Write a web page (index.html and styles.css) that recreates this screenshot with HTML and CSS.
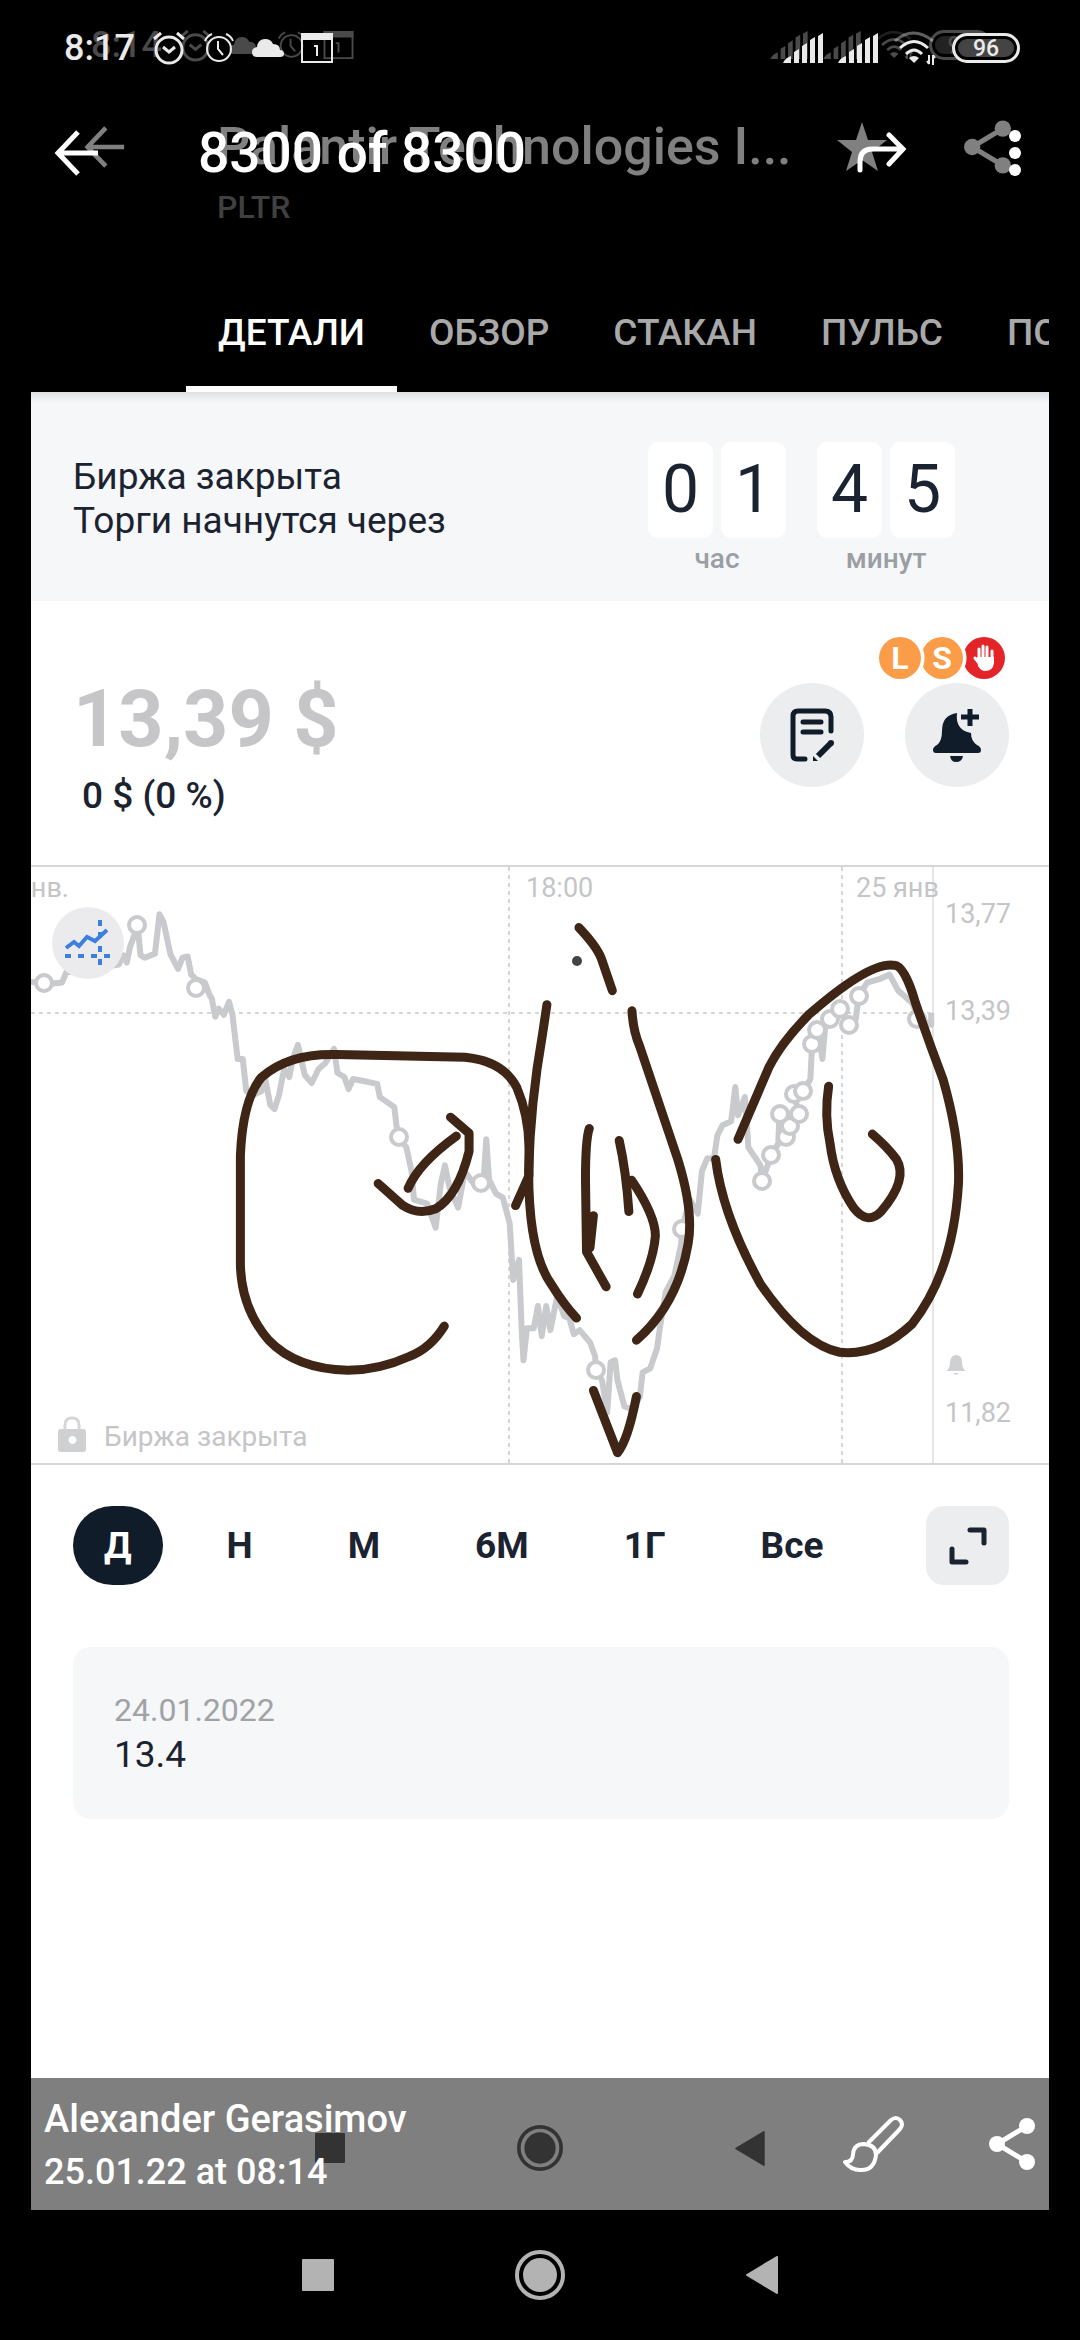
FILE: index.html
```html
<!DOCTYPE html>
<html lang="ru">
<head>
    <meta charset="UTF-8">
    <meta name="viewport" content="width=device-width, initial-scale=1.0">
    <title>8300 of 8300</title>
    <link rel="stylesheet" href="styles.css">
</head>
<body>

<!-- shared icons -->
<svg class="sprite" aria-hidden="true">
    <symbol id="alarm" viewBox="0 0 34 34">
        <g fill="none" stroke="currentColor" stroke-width="3">
            <circle cx="17" cy="19" r="13"/>
            <path d="M2 8 L9 2 M32 8 L25 2"/>
            <path d="M11 16 L17 21 L23 16"/>
        </g>
    </symbol>
    <symbol id="clock" viewBox="0 0 32 32">
        <g fill="none" stroke="currentColor" stroke-width="2">
            <circle cx="16" cy="17" r="12"/>
            <path d="M2 9 Q4 4 9 2 M30 9 Q28 4 23 2"/>
            <path d="M15 9 V17 L20 23"/>
        </g>
    </symbol>
    <symbol id="cloud" viewBox="0 0 32 20">
        <path fill="currentColor" d="M5 19 Q0 19 0 14 Q0 10 5 9 Q6 1 13 1 Q19 1 21 6 Q28 6 28 12 Q32 12 32 16 Q32 19 28 19 Z"/>
    </symbol>
    <symbol id="calendar" viewBox="0 0 32 30">
        <path fill="none" stroke="currentColor" stroke-width="2" d="M1 1 H31 V29 H1 Z"/>
        <path fill="currentColor" d="M0 0 H32 V7 H0 Z M13 12 H17 V23 H15 V14 H13 Z"/>
    </symbol>
    <symbol id="signal" viewBox="0 0 40 30">
        <path fill="currentColor" d="M0 30 Q2 25 8 23 V30 Z M11 19 L16 16 V30 H11 Z M19 13 L24 10 V30 H19 Z M27 7 L32 4 V30 H27 Z M35 3 L40 0 V30 H35 Z"/>
    </symbol>
    <symbol id="wifi" viewBox="0 0 44 34">
        <g fill="none" stroke="currentColor" stroke-width="3">
            <path opacity=".4" d="M2 10 Q20 -6 40 10"/>
            <path d="M7 17 Q21 4 35 17"/>
            <path d="M13 23 Q21 15 29 23"/>
            <path stroke-width="2" d="M36 24 V33 M40 34 V24 M34 30 L36 33 M40 24 L42 27"/>
        </g>
        <path fill="currentColor" d="M16 27 Q21 23 26 27 L21 32 Z"/>
    </symbol>
    <symbol id="back" viewBox="0 0 44 46">
        <path fill="none" stroke="currentColor" stroke-width="5" d="M44 23 H4 M24 2 L4 23 L24 44"/>
    </symbol>
    <symbol id="share" viewBox="0 0 46 52">
        <path fill="none" stroke="currentColor" stroke-width="5" d="M38 8 L8 26 L38 44"/>
        <g fill="currentColor">
            <circle cx="38" cy="8" r="8"/>
            <circle cx="8" cy="26" r="8"/>
            <circle cx="38" cy="44" r="8"/>
        </g>
    </symbol>
    <symbol id="nav-recent" viewBox="0 0 32 32">
        <rect fill="currentColor" width="32" height="32" rx="1"/>
    </symbol>
    <symbol id="nav-home" viewBox="0 0 50 50">
        <circle cx="25" cy="25" r="23" fill="none" stroke="currentColor" stroke-width="4"/>
        <circle cx="25" cy="25" r="17" fill="currentColor"/>
    </symbol>
    <symbol id="nav-back" viewBox="0 0 32 38">
        <path fill="currentColor" stroke="currentColor" stroke-width="2" stroke-linejoin="round" d="M1 19 L31 1 V37 Z"/>
    </symbol>
</svg>

<main class="photo">
    <div class="status status-photo">
        <span class="time">8:14</span>
        <svg width="33" height="33"><use href="#alarm"/></svg>
        <svg width="31" height="19"><use href="#cloud"/></svg>
        <svg width="29" height="30"><use href="#clock"/></svg>
        <svg width="31" height="28"><use href="#calendar"/></svg>
        <svg class="push" width="38" height="28"><use href="#signal"/></svg>
        <svg width="38" height="28"><use href="#signal"/></svg>
        <svg width="38" height="30"><use href="#wifi"/></svg>
        <span class="battery">96</span>
    </div>

    <header class="stock-header">
        <button class="icon-button" aria-label="Назад"><svg width="42" height="42"><use href="#back"/></svg></button>
        <div class="stock-name">
            <h2>Palantir Technologies I...</h2>
            <p>PLTR</p>
        </div>
        <button class="icon-button" aria-label="Избранное">
            <svg width="52" height="50" viewBox="0 0 52 50"><path fill="currentColor" d="M26 0 L32 18 H51 L36 30 L42 49 L26 38 L10 49 L16 30 L1 18 H20 Z"/></svg>
        </button>
        <button class="icon-button" aria-label="Поделиться"><svg width="47" height="54"><use href="#share"/></svg></button>
    </header>

    <nav class="tabs">
        <button class="tab active">ДЕТАЛИ</button>
        <button class="tab">ОБЗОР</button>
        <button class="tab">СТАКАН</button>
        <button class="tab">ПУЛЬС</button>
        <button class="tab">ПОРТФЕЛЬ</button>
    </nav>

    <section class="market-closed">
        <p class="closed-text">Биржа закрыта<br>Торги начнутся через</p>
        <div class="counter">
            <div class="digits"><span>0</span><span>1</span></div>
            <p>час</p>
        </div>
        <div class="counter">
            <div class="digits"><span>4</span><span>5</span></div>
            <p>минут</p>
        </div>
    </section>

    <section class="quote">
        <div class="quote-price">
            <p class="price">13,39 $</p>
            <p class="change">0 $ (0 %)</p>
        </div>
        <div class="quote-side">
            <div class="badges">
                <span class="badge">L</span>
                <span class="badge">S</span>
                <span class="badge badge-stop">
                    <svg width="22" height="28" viewBox="0 0 22 28"><g fill="none" stroke="#fff" stroke-width="3" stroke-linecap="round"><path d="M6 16 V5 M10 14 V2 M14 14 V3 M19 16 V7 M6 19 L2 14"/></g><path fill="#fff" d="M4 13 H21 V19 Q20 27 12 27 Q8 27 5 22 Z"/></svg>
                </span>
            </div>
            <div class="quote-actions">
                <button class="round-button" aria-label="Заметка">
                    <svg width="46" height="54" viewBox="0 0 46 54">
                        <g fill="none" stroke="currentColor" stroke-width="5" stroke-linecap="round">
                            <path d="M16 51 H8 Q4 51 4 47 V8 Q4 3 9 3 H36 Q42 3 42 9 V23"/>
                            <path d="M14 14 H32 M14 24 H32"/>
                        </g>
                        <path fill="none" stroke="currentColor" stroke-width="6" d="M29 48 L42 35"/>
                        <path fill="currentColor" d="M24 53 V48 L29 53 Z"/>
                        <circle cx="42" cy="35" r="3" fill="currentColor"/>
                    </svg>
                </button>
                <button class="round-button" aria-label="Уведомление">
                    <svg width="50" height="54" viewBox="0 0 50 54">
                        <path fill="currentColor" d="M25 5 Q23 22 39 25 Q39 33 45 37 Q49 39 49 42 Q49 45 46 45 H4 Q1 45 1 42 Q1 39 5 37 Q10 33 10 23 Q10 7 25 5 Z"/>
                        <path fill="currentColor" d="M18 48 H31 Q30 54 24 54 Q19 54 18 48 Z"/>
                        <path fill="none" stroke="currentColor" stroke-width="5" d="M38 1 V18 M29 9 H47"/>
                    </svg>
                </button>
            </div>
        </div>
    </section>

    <section class="chart">
        <svg class="chart-canvas" viewBox="0 0 1018 596">
            <path class="grid" d="M478 0 V596 M811 0 V596 M0 146 H901"/>
            <path class="axis" d="M902 0 V596"/>

            <text x="38" y="30" text-anchor="end">янв.</text>
            <text x="495" y="30">18:00</text>
            <text x="825" y="30">25 янв</text>
            <text x="914" y="56">13,77</text>
            <text x="914" y="153">13,39</text>
            <text x="914" y="555">11,82</text>
            <text class="closed-label" x="73" y="579">Биржа закрыта</text>
            <path class="soft" d="M915 504 Q919 502 919 495 Q920 488 925 488 Q931 488 931 495 Q931 502 935 504 Z M922 506 H928 L925 508 Z"/>
            <path class="soft" fill-rule="evenodd" d="M30 562 H52 Q55 562 55 565 V582 Q55 585 52 585 H30 Q27 585 27 582 V565 Q27 562 30 562 Z M41 569 A4 4 0 1 0 42 569 Z"/>
            <path class="shackle" d="M34 563 V558 Q34 551 41 551 Q48 551 48 558 V563"/>

            <g transform="translate(-31 -17) scale(.3444 .4018)">
                <path class="line" d="M80 328 L128 331 L155 332 L180 330 L192 305 L345 285 L358 262 L368 280 L378 240 L395 200 L402 210 L408 262 L420 268 L450 258 L463 160 L475 180 L495 260 L517 296 L530 268 L545 265 L555 310 L570 322 L595 330 L608 360 L615 370 L625 415 L635 395 L650 410 L665 378 L675 410 L690 520 L705 520 L715 600 L735 610 L760 600 L768 560 L785 635 L797 645 L810 610 L825 545 L840 565 L850 520 L865 485 L885 560 L905 580 L925 545 L945 530 L970 495 L980 555 L1000 565 L1012 595 L1025 570 L1055 575 L1095 582 L1103 615 L1145 640 L1155 714 L1180 740 L1195 800 L1202 870 L1240 880 L1265 940 L1280 830 L1292 785 L1305 840 L1330 890 L1350 800 L1375 830 L1404 825 L1412 720 L1420 820 L1440 855 L1460 865 L1480 930 L1490 1070 L1507 1020 L1515 1200 L1520 1270 L1530 1190 L1550 1190 L1562 1135 L1573 1210 L1586 1135 L1598 1195 L1618 1110 L1638 1160 L1653 1165 L1666 1205 L1683 1195 L1713 1225 L1728 1260 L1730 1293 L1748 1320 L1763 1400 L1773 1275 L1786 1270 L1793 1320 L1813 1385 L1838 1392 L1858 1360 L1866 1300 L1888 1290 L1908 1240 L1916 1190 L1933 1100 L1958 1060 L1978 980 L1980 942 L2003 870 L2026 905 L2038 800 L2053 768 L2073 768 L2083 710 L2098 685 L2123 675 L2135 590 L2143 660 L2163 615 L2173 740 L2208 785 L2213 823 L2240 758 L2260 730 L2263 656 L2320 656 L2305 608 L2333 600 L2353 570 L2358 484 L2376 447 L2388 520 L2396 440 L2438 395 L2465 430 L2485 420 L2493 363 L2518 330 L2558 320 L2583 310 L2608 350 L2648 380 L2668 420 L2704 435 V405"/>
            </g>
            <g class="points">
                <circle cx="13" cy="116" r="8"/>
                <circle cx="106" cy="58" r="8"/>
                <circle cx="165" cy="121" r="8"/>
                <circle cx="368" cy="270" r="8"/>
                <circle cx="450" cy="316" r="8"/>
                <circle cx="565" cy="503" r="8"/>
                <circle cx="651" cy="362" r="8"/>
                <circle cx="731" cy="314" r="8"/>
                <circle cx="740" cy="288" r="8"/>
                <circle cx="755" cy="270" r="8"/>
                <circle cx="759" cy="259" r="8"/>
                <circle cx="749" cy="247" r="8"/>
                <circle cx="768" cy="247" r="8"/>
                <circle cx="763" cy="227" r="8"/>
                <circle cx="772" cy="224" r="8"/>
                <circle cx="781" cy="177" r="8"/>
                <circle cx="786" cy="163" r="8"/>
                <circle cx="799" cy="152" r="8"/>
                <circle cx="809" cy="142" r="8"/>
                <circle cx="818" cy="158" r="8"/>
                <circle cx="828" cy="129" r="8"/>
                <circle cx="886" cy="152" r="8"/>
            </g>

            <!-- hand-drawn marks -->
            <g class="marks" transform="translate(-31 -17) scale(.3444 .4018)">
                <path d="M1290 1185 Q1250 1240 1190 1260 Q1100 1295 1010 1295 Q860 1292 780 1220 Q700 1140 698 1030 V760 Q705 620 760 565 Q840 505 980 509 L1350 516 Q1460 525 1500 590 Q1535 660 1536 740 V810 L1497 885"/>
                <path d="M1098 830 L1170 885 Q1215 910 1265 893 Q1330 860 1362 750 V705 L1308 665 M1185 842 Q1215 780 1325 712"/>
                <path d="M1588 385 L1575 460 Q1540 630 1535 800 Q1535 1000 1600 1080 Q1640 1135 1674 1165"/>
                <path d="M1681 193 Q1733 240 1746 270 L1778 350"/>
                <path d="M1835 400 Q1838 450 1858 490 L1968 770 Q2015 900 1998 980 Q1968 1130 1848 1220"/>
                <path d="M1711 693 Q1700 720 1700 820 L1703 1000 L1760 1087 M1723 910 L1713 990"/>
                <path d="M1798 723 Q1818 800 1826 900 M1834 822 Q1903 910 1903 960 Q1898 1020 1851 1105"/>
                <path d="M1723 1345 L1793 1500 Q1823 1470 1848 1360"/>
                <path d="M2143 720 L2233 540 Q2268 480 2348 410 Q2528 275 2598 287 Q2628 290 2658 380 Q2698 480 2738 570 Q2788 720 2783 830 Q2768 1050 2648 1180 Q2548 1260 2438 1250 Q2328 1230 2208 1080 Q2098 910 2078 770"/>
                <path d="M2406 588 Q2393 660 2410 730 Q2423 820 2478 890 Q2518 935 2558 900 Q2638 820 2603 770 Q2578 740 2533 707"/>
            </g>
            <circle cx="546" cy="94" r="5" fill="#444"/>
        </svg>
        <button class="indicators" aria-label="Индикаторы">
            <svg width="46" height="46" viewBox="0 0 46 46">
                <g fill="none" stroke="#3d7fdc" stroke-width="4">
                    <path d="M1 28 L9 22 L14 26 L22 17 L30 21 L42 10"/>
                    <path d="M0 36 H6 M13 36 H19 M26 36 H32 M39 36 H45 M35 0 V6 M35 12 V18 M35 26 V32 M35 39 V45"/>
                </g>
            </svg>
        </button>
    </section>

    <div class="ranges">
        <button class="range active">Д</button>
        <button class="range">Н</button>
        <button class="range">М</button>
        <button class="range">6М</button>
        <button class="range">1Г</button>
        <button class="range">Все</button>
        <button class="expand" aria-label="Развернуть">
            <svg width="38" height="38" viewBox="0 0 38 38"><path fill="none" stroke="currentColor" stroke-width="5" stroke-linecap="round" stroke-linejoin="round" d="M21 3 H35 V16 M3 22 V35 H17"/></svg>
        </button>
    </div>

    <section class="note">
        <p class="note-date">24.01.2022</p>
        <p class="note-value">13.4</p>
    </section>

    <div class="photo-nav">
        <svg width="30" height="30"><use href="#nav-recent"/></svg>
        <svg width="46" height="46"><use href="#nav-home"/></svg>
        <svg width="30" height="35"><use href="#nav-back"/></svg>
    </div>

    <footer class="caption">
        <div class="caption-text">
            <p class="author">Alexander Gerasimov</p>
            <p>25.01.22 at 08:14</p>
        </div>
        <button class="icon-button" aria-label="Edit">
            <svg width="62" height="58" viewBox="0 0 62 58"><path fill="none" stroke="currentColor" stroke-width="4" stroke-linejoin="round" d="M25 28 L48 5 Q53 1 57 5 Q61 9 57 14 L34 38 M2 47 Q10 47 10 39 Q11 29 21 29 Q33 30 33 40 Q31 56 17 55 Q8 55 2 47 Z"/></svg>
        </button>
        <button class="icon-button" aria-label="Share"><svg width="46" height="52"><use href="#share"/></svg></button>
    </footer>
</main>

<header class="viewer">
    <div class="status status-phone">
        <span class="time">8:17</span>
        <svg width="34" height="34"><use href="#alarm"/></svg>
        <svg width="32" height="32"><use href="#clock"/></svg>
        <svg width="32" height="20"><use href="#cloud"/></svg>
        <svg width="32" height="30"><use href="#calendar"/></svg>
        <svg class="push" width="40" height="30"><use href="#signal"/></svg>
        <svg width="40" height="30"><use href="#signal"/></svg>
        <svg width="44" height="34"><use href="#wifi"/></svg>
        <span class="battery">96</span>
    </div>
    <div class="viewer-bar">
        <button class="icon-button" aria-label="Back"><svg width="44" height="46"><use href="#back"/></svg></button>
        <h1>8300 of 8300</h1>
        <button class="icon-button" aria-label="Forward">
            <svg width="50" height="42" viewBox="0 0 50 42"><path fill="none" stroke="currentColor" stroke-width="5" stroke-linecap="round" d="M3 38 V30 Q3 17 15 17 H46 M32 3 L46 17 L32 32"/></svg>
        </button>
        <button class="icon-button" aria-label="More">
            <svg width="12" height="46" viewBox="0 0 12 46"><g fill="currentColor"><circle cx="6" cy="6" r="6"/><circle cx="6" cy="23" r="6"/><circle cx="6" cy="40" r="6"/></g></svg>
        </button>
    </div>
</header>

<nav class="phone-nav">
    <button aria-label="Recent"><svg width="32" height="32"><use href="#nav-recent"/></svg></button>
    <button aria-label="Home"><svg width="50" height="50"><use href="#nav-home"/></svg></button>
    <button aria-label="Back"><svg width="32" height="38"><use href="#nav-back"/></svg></button>
</nav>

</body>
</html>
```
FILE: styles.css
```css
* {
    box-sizing: border-box;
}

body {
    font-family: Roboto, 'Liberation Sans', sans-serif;
    margin: 0;
    min-height: 100vh;
    display: flex;
    flex-direction: column;
    position: relative;
    background: #000;
    color: #1b2230;
}

h1, h2, p {
    margin: 0;
    font-weight: 500;
}

button {
    font-family: inherit;
    color: inherit;
    background: none;
    border: none;
    padding: 0;
    cursor: pointer;
}

svg {
    display: block;
    flex-shrink: 0;
}

.sprite {
    position: absolute;
    width: 0;
    height: 0;
}

/* status bars */
.status {
    display: flex;
    align-items: center;
    gap: 17px;
    font-weight: 500;
}

.status .push {
    margin-left: auto;
}

.status .push, .status .push ~ svg {
    margin-right: -2px;
}

.time {
    font-size: 36px;
}

.battery {
    width: 68px;
    height: 30px;
    border: 3px solid currentColor;
    border-radius: 15px;
    background: #444;
    box-shadow: inset 0 0 0 3px #000;
    font-size: 23px;
    line-height: 25px;
    text-align: center;
}

.status-photo {
    height: 90px;
    padding: 0 57px 0 60px;
    color: #4a4a4a;
}

.status-photo .battery {
    width: 63px;
    background: #222;
}

.status-phone {
    height: 96px;
    padding: 0 60px 0 64px;
    color: #eaeaea;
}

.icon-button {
    height: 60px;
    display: flex;
    align-items: center;
    justify-content: center;
}

/* opened picture */
.photo {
    flex: 1;
    display: flex;
    flex-direction: column;
    position: relative;
    margin: 0 31px;
    background: linear-gradient(#000 392px, #fff 392px);
}

.stock-header {
    display: flex;
    height: 182px;
    padding: 27px 38px 0 52px;
    color: #808080;
}

.stock-name {
    flex: 1;
    margin-left: 92px;
    line-height: 60px;
}

.stock-name h2 {
    font-size: 52px;
    white-space: nowrap;
}

.stock-name p {
    font-size: 32px;
    color: #404040;
}

.stock-header .icon-button:last-child {
    margin-left: 76px;
}

.tabs {
    display: flex;
    height: 120px;
    padding-left: 155px;
    overflow: hidden;
}

.tab {
    flex-shrink: 0;
    padding: 0 32px;
    border-top: 6px solid transparent;
    border-bottom: 6px solid transparent;
    font-size: 37px;
    font-weight: 500;
    color: #a9a9a9;
}

.tab.active {
    color: #fff;
    border-bottom-color: #fff;
}

.market-closed {
    display: flex;
    height: 209px;
    padding: 50px 94px 0 42px;
    background: #f5f7f9;
    box-shadow: inset 0 12px 8px -8px #d9dcdd;
}

.closed-text {
    flex: 1;
    margin-top: 13px;
    font-size: 37px;
    line-height: 44px;
    font-weight: 400;
}

.counter {
    margin-left: 31px;
    text-align: center;
}

.counter p {
    margin-top: 5px;
    font-size: 28px;
    line-height: 32px;
    color: #9b9ea3;
}

.digits {
    display: flex;
    gap: 8px;
}

.digits span {
    width: 65px;
    height: 96px;
    border-radius: 10px;
    background: #fff;
    font-size: 66px;
    line-height: 96px;
}

.quote {
    display: flex;
    justify-content: space-between;
    height: 264px;
    padding: 36px 40px 0 42px;
}

.price {
    margin-top: 42px;
    font-size: 79px;
    line-height: 80px;
    font-weight: 700;
    color: #c6c6c8;
}

.change {
    margin-top: 17px;
    padding-left: 9px;
    font-size: 37px;
    line-height: 40px;
}

.badges {
    display: flex;
    justify-content: flex-end;
    padding-right: 4px;
    margin-bottom: 4px;
}

.badge {
    display: flex;
    align-items: center;
    justify-content: center;
    width: 42px;
    height: 42px;
    border-radius: 50%;
    background: #fb9c49;
    color: #fff;
    font-size: 32px;
    font-weight: 700;
}

.badge-stop {
    background: #e42528;
}

/* bite left by the badge before */
.badge + .badge {
    background: radial-gradient(circle at -21px 50%, #fff 24px, #fb9c49 25px);
}

.badge + .badge-stop {
    background: radial-gradient(circle at -21px 50%, #fff 24px, #e42528 25px);
}

.quote-actions {
    display: flex;
    gap: 41px;
}

.round-button {
    display: flex;
    align-items: center;
    justify-content: center;
    width: 104px;
    height: 104px;
    border-radius: 50%;
    background: #ebedef;
    color: #111c2b;
}

/* chart */
.chart {
    position: relative;
    border-top: 2px solid #d6d6d8;
    border-bottom: 2px solid #d6d6d8;
}

.chart-canvas {
    width: 100%;
    height: auto;
}

.chart text {
    font-size: 27px;
    fill: #c4c5c7;
}

.chart .closed-label {
    font-size: 28px;
}

.grid {
    fill: none;
    stroke: #d6d6d8;
    stroke-width: 2;
    stroke-dasharray: 4 4;
}

.axis {
    stroke: #e6e6e8;
    stroke-width: 2;
}

.soft {
    fill: #cfd0d2;
}

.shackle {
    fill: none;
    stroke: #d6d6d8;
    stroke-width: 3;
}

.line {
    fill: none;
    stroke: #c9cacd;
    stroke-width: 6;
    stroke-linejoin: round;
    vector-effect: non-scaling-stroke;
}

.points circle {
    fill: #fff;
    stroke: #c9cacd;
    stroke-width: 4;
}

.marks path {
    fill: none;
    stroke: #3f2515;
    stroke-width: 9;
    stroke-linecap: round;
    stroke-linejoin: round;
    vector-effect: non-scaling-stroke;
}

.indicators {
    position: absolute;
    top: 40px;
    left: 21px;
    display: flex;
    align-items: center;
    justify-content: center;
    width: 72px;
    height: 72px;
    border-radius: 50%;
    background: #ebebed;
}

.ranges {
    display: flex;
    gap: 33px;
    padding: 41px 40px 0 42px;
}

.range {
    height: 79px;
    padding: 0 31px;
    border-radius: 40px;
    font-size: 37px;
    font-weight: 700;
    color: #1b2230;
}

.range.active {
    background: #111c2b;
    color: #fff;
}

.expand {
    display: flex;
    align-items: center;
    justify-content: center;
    width: 83px;
    height: 79px;
    margin-left: auto;
    border-radius: 18px;
    background: #ebedef;
}

.note {
    margin: 62px 40px 0 42px;
    padding: 41px;
    border-radius: 18px;
    background: #f5f7f9;
}

.note p {
    font-weight: 400;
}

.note-date {
    font-size: 32px;
    line-height: 44px;
    color: #a0a3a6;
}

.note-value {
    font-size: 37px;
    line-height: 46px;
}

.photo-nav {
    display: grid;
    grid-template-columns: repeat(3, 210px);
    justify-content: center;
    justify-items: center;
    align-items: center;
    height: 132px;
    padding-top: 8px;
    margin-top: auto;
    color: #666;
}

.caption {
    position: absolute;
    left: 0;
    right: 0;
    bottom: 0;
    display: flex;
    align-items: flex-start;
    height: 132px;
    padding: 15px 14px 0 13px;
    background: rgba(0, 0, 0, 0.5);
    color: #fff;
}

.caption-text {
    flex: 1;
    font-size: 36px;
    line-height: 53px;
}

.caption .author {
    font-size: 38px;
}

.caption .icon-button {
    margin-top: 21px;
}

.caption .icon-button:last-child {
    margin-left: 84px;
}

/* viewer controls over the picture */
.viewer {
    position: absolute;
    top: 0;
    left: 0;
    right: 0;
    color: #fff;
}

.viewer-bar {
    display: flex;
    align-items: center;
    padding: 27px 59px 0 54px;
}

.viewer-bar h1 {
    flex: 1;
    margin-left: 100px;
    font-size: 55px;
    line-height: 60px;
}

.viewer-bar .icon-button:last-child {
    margin-left: 102px;
}

.phone-nav {
    display: grid;
    grid-template-columns: repeat(3, 222px);
    justify-content: center;
    height: 130px;
    color: #b3b3b3;
}

.phone-nav button {
    display: flex;
    align-items: center;
    justify-content: center;
}
```
